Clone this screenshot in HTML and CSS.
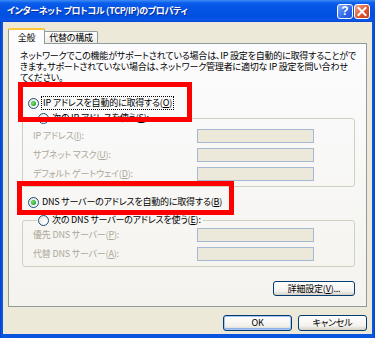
FILE: index.html
```html
<!DOCTYPE html>
<html lang="ja">
<head>
<meta charset="utf-8">
<title>インターネット プロトコル (TCP/IP)のプロパティ</title>
<link rel="stylesheet" href="styles.css">
</head>
<body>
<div class="window">
  <div class="titlebar">
    <span class="title">インターネット プロトコル (TCP/IP)のプロパティ</span>
    <div class="tbtns">
      <span class="tbtn help">?</span>
      <span class="tbtn close"><svg width="14" height="13" viewBox="0 0 14 13"><path d="M3.5 3 L10.5 10 M10.5 3 L3.5 10" stroke="#fff" stroke-width="2" stroke-linecap="square"/></svg></span>
    </div>
  </div>
  <div class="client">
    <div class="tabs">
      <div class="tab active">全般</div>
      <div class="tab">代替の構成</div>
    </div>
    <div class="panel">
      <div class="desc">
        <span class="line">ネットワークでこの機能がサポートされている場合は、IP 設定を自動的に取得することがで</span>
        <span class="line">きます。サポートされていない場合は、ネットワーク管理者に適切な IP 設定を問い合わせ</span>
        <span class="line">てください。</span>
      </div>
      <div class="opt first"><span class="radio checked"></span><span class="focus">IP アドレスを自動的に取得する(<u>O</u>)</span></div>
      <fieldset class="group g1">
        <legend><span class="radio"></span><span>次の IP アドレスを使う(<u>S</u>):</span></legend>
        <label class="dis">IP アドレス(<u>I</u>):</label><span class="field"></span>
        <label class="dis">サブネット マスク(<u>U</u>):</label><span class="field"></span>
        <label class="dis">デフォルト ゲートウェイ(<u>D</u>):</label><span class="field"></span>
      </fieldset>
      <div class="opt dns"><span class="radio checked"></span><span class="lbl">DNS サーバーのアドレスを自動的に取得する(<u>B</u>)</span></div>
      <fieldset class="group g2">
        <legend><span class="radio"></span><span>次の DNS サーバーのアドレスを使う(<u>E</u>):</span></legend>
        <label class="dis">優先 DNS サーバー(<u>P</u>):</label><span class="field"></span>
        <label class="dis">代替 DNS サーバー(<u>A</u>):</label><span class="field"></span>
      </fieldset>
      <div class="adv"><button class="btn">詳細設定(<u>V</u>)...</button></div>
      <div class="mark m1"></div>
      <div class="mark m2"></div>
    </div>
    <div class="footer">
      <button class="btn default">OK</button>
      <button class="btn">キャンセル</button>
    </div>
  </div>
</div>
</body>
</html>
```

FILE: styles.css
```css
* { box-sizing: border-box; }
html, body { margin: 0; padding: 0; }
body {
  width: 375px;
  height: 338px;
  overflow: hidden;
  font-family: "Noto Sans CJK JP", "Liberation Sans", sans-serif;
  font-size: 9px;
  letter-spacing: -0.2px;
  color: #000;
  font-feature-settings: "palt";
  background: #0A55E0;
}
.window {
  width: 375px;
  height: 338px;
  display: flex;
  flex-direction: column;
  padding: 0 3px 4px;
  background: linear-gradient(90deg, #0831B8 0, #0A55E0 1px, #0A55E0 374px, #0831B8 375px);
}
.titlebar {
  height: 22px;
  margin: 0 -3px;
  display: flex;
  align-items: center;
  padding: 0 5px 0 7px;
  background: linear-gradient(#3D8BF5 0, #0A5EEB 3px, #0454E6 8px, #0050E0 16px, #0A55E8 20px, #0648D0 22px);
}
.title {
  flex: 1;
  color: #fff;
  font-weight: bold;
  font-size: 9px;
  letter-spacing: -0.35px;
  line-height: 14px;
  text-shadow: 1px 1px 0 #0A2E9A;
  white-space: nowrap;
}
.tbtns { display: flex; gap: 1px; }
.tbtn {
  width: 16px;
  height: 15px;
  border: 1px solid #fff;
  border-radius: 3px;
  display: flex;
  align-items: center;
  justify-content: center;
}
.help {
  background: linear-gradient(135deg, #7FA9F7, #2D68E8 60%, #1E55D6);
  color: #fff;
  font-family: "Liberation Sans", sans-serif;
  font-weight: bold;
  font-size: 12px;
  letter-spacing: 0;
  line-height: 13px;
}
.close {
  background: linear-gradient(135deg, #F0A88E, #E0552F 55%, #C83A18);
}
.client {
  flex: 1;
  background: #ECE9D8;
  display: flex;
  flex-direction: column;
  padding: 6px 5px 0;
}
.tabs {
  display: flex;
  align-items: flex-end;
  height: 15px;
  position: relative;
  z-index: 1;
}
.tab {
  height: 12px;
  width: 54px;
  margin-left: -1px;
  border: 1px solid #919B9C;
  border-bottom: none;
  border-radius: 2px 2px 0 0;
  background: linear-gradient(#FFFFFF, #ECEBE6);
  display: flex;
  align-items: center;
  justify-content: center;
  font-size: 9px;
  line-height: 11px;
}
.tab.active {
  margin-left: 0;
  width: 37px;
  height: 16px;
  margin-bottom: -1px;
  background: #FCFCFE;
  border-top: 2px solid #FFC83C;
  position: relative;
  z-index: 2;
}
.panel {
  height: 264px;
  border: 1px solid #919B9C;
  background: linear-gradient(#FCFCFE, #F4F3EE);
  padding-top: 6px;
  position: relative;
  display: flex;
  flex-direction: column;
  align-items: flex-start;
}
.desc {
  margin: 0 0 0 11px;
  display: flex;
  flex-direction: column;
}
.desc .line {
  display: block;
  height: 11px;
  line-height: 11px;
  white-space: nowrap;
}
.opt {
  display: flex;
  align-items: center;
  gap: 3px;
  height: 14px;
  margin-left: 19px;
  line-height: 12px;
}
.opt.first { margin-top: 13px; }
.opt.dns { margin-top: 8px; }
.focus {
  outline: 1px dotted #000;
  outline-offset: 0;
  padding: 0 1px;
}
.radio {
  width: 11px;
  height: 11px;
  flex: none;
  border: 1px solid #1C5180;
  border-radius: 50%;
  background: radial-gradient(circle at 65% 65%, #FFFFFF 20%, #DCD9CC);
  position: relative;
}
.radio.checked::after {
  content: "";
  position: absolute;
  left: 2px;
  top: 2px;
  width: 5px;
  height: 5px;
  border-radius: 50%;
  background: radial-gradient(circle at 40% 40%, #7DE87D, #21A121 70%);
}
.group {
  align-self: stretch;
  margin: 0 11px 0 13px;
  border: 1px solid #D0D0BF;
  border-radius: 3px;
  min-width: 0;
  display: grid;
  grid-template-columns: 1fr 117px;
  grid-auto-rows: 14px;
  row-gap: 5px;
  align-items: center;
  padding: 4px 40px 5px 10px;
}
.g1 { margin-top: 1px; }
.g2 { margin-top: 4px; padding-top: 1px; }
legend {
  display: flex;
  align-items: center;
  gap: 3px;
  height: 14px;
  line-height: 12px;
  margin-left: 4px;
  padding: 0 2px 0 1px;
}
label { line-height: 12px; }
.dis { color: #ACA899; }
.field {
  height: 14px;
  border: 1px solid #A5B9D3;
  background: #ECE9DB;
}
.adv {
  align-self: stretch;
  display: flex;
  justify-content: flex-end;
  margin: 14px 11px 0 0;
}
.btn {
  font-family: inherit;
  font-size: 9px;
  letter-spacing: -0.2px;
  font-feature-settings: "palt";
  color: #000;
  height: 15px;
  width: 82px;
  padding: 0;
  border: 1px solid #003C74;
  border-radius: 3px;
  background: linear-gradient(#FFFFFF, #F3F2ED 70%, #D6D0C5);
  line-height: 12px;
}
.footer {
  display: flex;
  justify-content: flex-end;
  gap: 6px;
  padding-top: 8px;
}
.footer .btn { width: 69px; height: 16px; }
.btn.default {
  box-shadow: inset 0 0 0 1px #A8C4F0, inset 0 -1px 0 1px #8FB0EA;
}
.mark {
  position: absolute;
  border: 5px solid #FF0000;
}
.m1 { left: 9px; top: 38px; width: 174px; height: 40px; }
.m2 { left: 8px; top: 137px; width: 217px; height: 34px; }
```
